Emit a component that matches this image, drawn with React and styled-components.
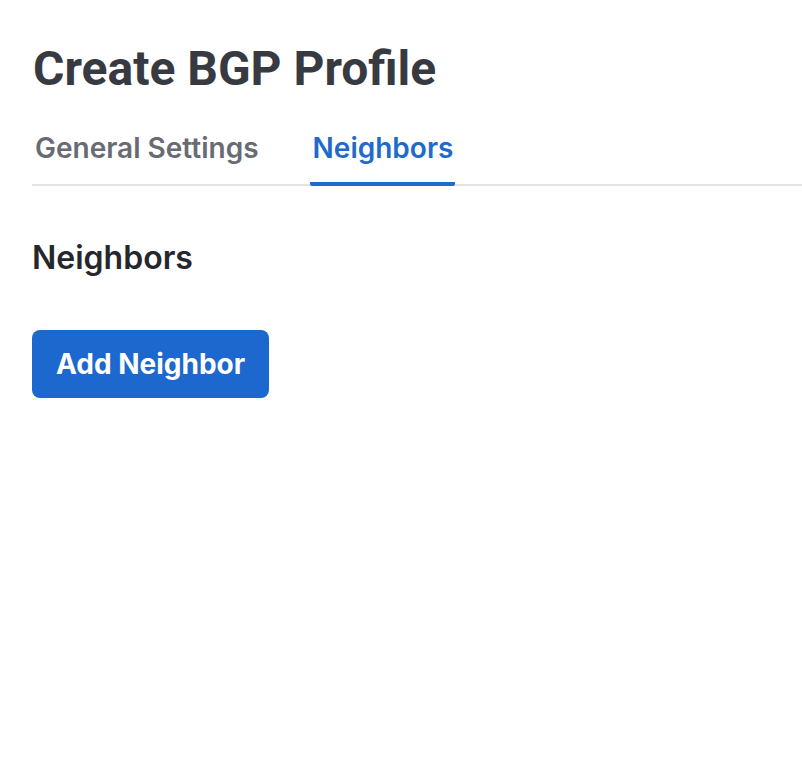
import React, { useState } from "react";
import styled, { createGlobalStyle } from "styled-components";

const Global = createGlobalStyle`
  html, body { margin: 0; padding: 0; background: #ffffff; }
  body { font-family: Inter, "Noto Sans", sans-serif; }
`;

const Page = styled.div`
  padding: 41px 0 0 32px;
  display: flex;
  flex-direction: column;
`;

const Title = styled.h1`
  margin: 0 0 0 1px;
  font-family: Roboto, "Liberation Sans", sans-serif;
  font-weight: 700;
  font-size: 48px;
  line-height: 56px;
  color: #373a41;
`;

const TabList = styled.div`
  display: flex;
  gap: 49px;
  margin-top: 34px;
  border-bottom: 2px solid #e3e4e6;
`;

const Tab = styled.button`
  border: none;
  background: none;
  padding: 0 2px 17px 3px;
  margin: 0 0 -2px;
  font-family: Inter, "Noto Sans", sans-serif;
  font-size: 28px;
  font-weight: 600;
  line-height: 34px;
  color: ${(p) => (p.$active ? "#1f6bcc" : "#686b73")};
  border-bottom: 4px solid ${(p) => (p.$active ? "#1f6bcc" : "transparent")};
  border-radius: 2px;
  cursor: pointer;
`;

const Section = styled.section`
  display: flex;
  flex-direction: column;
  align-items: flex-start;
  padding-top: 52px;
`;

const SectionTitle = styled.h2`
  margin: 0;
  font-family: Inter, "Noto Sans", sans-serif;
  font-size: 32px;
  font-weight: 600;
  line-height: 40px;
  color: #25272c;
`;

const PrimaryButton = styled.button`
  margin-top: 52px;
  height: 68px;
  padding: 0 24px;
  border: none;
  border-radius: 8px;
  background: #1c68cf;
  color: #ffffff;
  font-family: Inter, "Noto Sans", sans-serif;
  font-size: 28px;
  font-weight: 700;
  cursor: pointer;
`;

export default function App() {
  const [tab, setTab] = useState("neighbors");
  return (
    <>
      <Global />
      <Page>
        <Title>Create BGP Profile</Title>
        <TabList>
          <Tab $active={tab === "general"} onClick={() => setTab("general")}>
            General Settings
          </Tab>
          <Tab $active={tab === "neighbors"} onClick={() => setTab("neighbors")}>
            Neighbors
          </Tab>
        </TabList>
        <Section>
          <SectionTitle>Neighbors</SectionTitle>
          <PrimaryButton>Add Neighbor</PrimaryButton>
        </Section>
      </Page>
    </>
  );
}
